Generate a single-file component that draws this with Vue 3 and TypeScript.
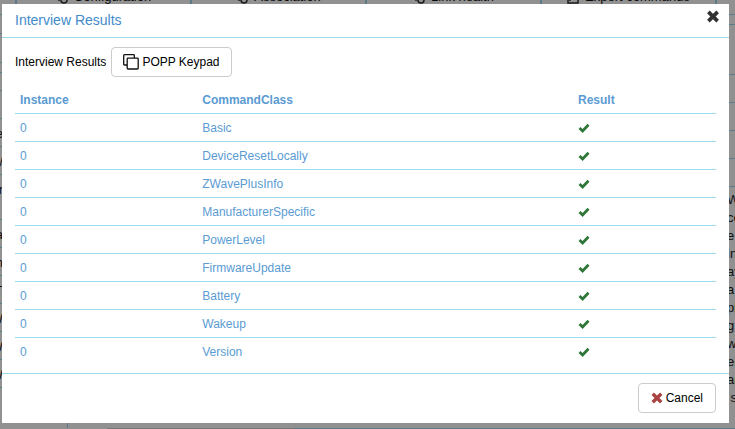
<script setup lang="ts">
import { ref } from 'vue'

interface CommandClassResult {
  instance: number
  name: string
  done: boolean
}

interface PageRow {
  height: number
  text: string
}

const names: string[] = [
  'Basic',
  'DeviceResetLocally',
  'ZWavePlusInfo',
  'ManufacturerSpecific',
  'PowerLevel',
  'FirmwareUpdate',
  'Battery',
  'Wakeup',
  'Version',
]
const results: CommandClassResult[] = names.map((name) => ({ instance: 0, name, done: true }))
const open = ref(true)
const tabs: string[] = ['Configuration', 'Association', 'Link health', 'Expert commands']
const rows: PageRow[] = [
  { height: 19, text: '' },
  { height: 29, text: '' },
  { height: 10, text: '' },
  { height: 18, text: '' },
  { height: 28, text: '' },
  { height: 28, text: 'e' },
  { height: 28, text: '/' },
  { height: 45, text: 'r' },
  { height: 28, text: 'a' },
  { height: 28, text: 'n' },
  { height: 28, text: 'T' },
  { height: 28, text: 'W' },
  { height: 28, text: 'W' },
  { height: 28, text: 'W' },
  { height: 28, text: '' },
]
const gaps: number[] = [10, 50, 28, 28, 28, 28, 5]
const notes: string[] = ['W', 'ce', 'e', 'in', 'ay', 'a', 'pl', 'g', 'wo', 'er', 'an', ' s']
</script>

<template>
  <div class="screen">
    <div class="page" aria-hidden="true">
      <nav class="tabs">
        <span v-for="(tab, i) in tabs" :key="tab" class="tab">
          <svg class="tab-icon" viewBox="0 0 12 12">
            <rect v-if="i === 3" x="1" y="1" width="10" height="10" />
            <circle v-else cx="8" cy="8" r="3" />
            <path d="M3 4v5" />
          </svg>
          {{ tab }}
        </span>
      </nav>
      <div class="columns">
        <div class="labels">
          <div v-for="(row, i) in rows" :key="i" class="row" :style="{ height: row.height + 'px' }">
            <span>{{ row.text }}</span>
          </div>
        </div>
        <div class="notes">
          <i v-for="(gap, i) in gaps" :key="i" class="rule" :style="{ height: gap + 'px' }"></i>
          <p v-for="note in notes" :key="note">{{ note }}</p>
        </div>
      </div>
      <div class="progress"><i></i></div>
    </div>

    <div v-if="open" class="backdrop">
      <section class="modal" role="dialog" aria-labelledby="modal-title">
        <header class="modal-header">
          <h1 id="modal-title">Interview Results</h1>
          <button class="close" type="button" aria-label="Close" @click="open = false">
            <svg viewBox="0 0 14 14"><path d="M2 2L12 12M12 2L2 12" /></svg>
          </button>
        </header>

        <div class="modal-body">
          <div class="device">
            <span>Interview Results</span>
            <button class="btn" type="button">
              <svg class="copy" viewBox="0 0 16 16">
                <path d="M4 11H1.5Q.7 11 .7 10.2V1.5Q.7 .7 1.5 .7H10.5Q11.3 .7 11.3 1.5V4" />
                <rect x="4.2" y="4.2" width="11" height="10.8" rx=".8" />
              </svg>
              POPP Keypad
            </button>
          </div>
          <table>
            <thead>
              <tr>
                <th class="instance">Instance</th>
                <th class="command">CommandClass</th>
                <th>Result</th>
              </tr>
            </thead>
            <tbody>
              <tr v-for="row in results" :key="row.name">
                <td>{{ row.instance }}</td>
                <td>{{ row.name }}</td>
                <td>
                  <svg v-if="row.done" class="check" viewBox="0 0 12 10" role="img" aria-label="Done">
                    <path d="M1.5 5L4.6 8L10.5 1.8" />
                  </svg>
                </td>
              </tr>
            </tbody>
          </table>
        </div>

        <footer class="modal-footer">
          <button class="btn" type="button" @click="open = false">
            <svg class="cancel" viewBox="0 0 14 14"><path d="M2 2L12 12M12 2L2 12" /></svg>
            Cancel
          </button>
        </footer>
      </section>
    </div>
  </div>
</template>

<style>
body {
  margin: 0;
}
</style>

<style scoped>
* {
  box-sizing: border-box;
}
.screen {
  position: relative;
  min-height: 100vh;
  overflow: hidden;
  font: 13px/18px "Liberation Sans", Arial, sans-serif;
  color: #222;
  background: #fff;
}
.page {
  position: absolute;
  inset: 0;
  display: flex;
  flex-direction: column;
  overflow: hidden;
}
.tabs {
  display: grid;
  grid-template-columns: repeat(4, 1fr);
  grid-auto-rows: 6px;
  margin: 0 18px 0 15px;
  border-right: 2px solid #9fd9ee;
}
.tab {
  display: flex;
  align-items: flex-end;
  justify-content: center;
  gap: 6px;
  border-left: 2px solid #9fd9ee;
  color: #111;
}
.tab-icon {
  width: 12px;
  height: 12px;
  margin-bottom: 2px;
  fill: none;
  stroke: #333;
  stroke-width: 1.5;
}
.columns {
  display: flex;
  flex: 1;
  justify-content: space-between;
  min-height: 0;
  padding-top: 8px;
}
.labels {
  width: 68px;
  border-right: 1px solid #9fd9ee;
}
.row {
  padding-top: 6px;
  border-top: 1px solid #9fd9ee;
}
.row span {
  display: flex;
  justify-content: flex-end;
  width: 3px;
}
.notes {
  width: 8px;
  overflow: hidden;
  white-space: pre;
}
.rule {
  display: block;
  border-top: 1px solid #9fd9ee;
}
.notes p {
  margin: 0;
}
.progress {
  height: 1px;
  margin-left: 107px;
  background: #d2d2d2;
}
.progress i {
  display: block;
  height: 1px;
  margin-left: 30%;
  background: #9fd9ee;
}
.backdrop {
  position: relative;
  min-height: 100vh;
  padding: 4px 6px 6px 2px;
  background: rgba(0, 0, 0, 0.43);
}
.modal {
  background: #fff;
}
.modal-header {
  display: flex;
  align-items: flex-start;
  justify-content: space-between;
  height: 34px;
  padding: 6px 9px 0 13px;
  border-bottom: 1px solid #9fd9ee;
}
h1 {
  margin: 0;
  font-size: 14px;
  font-weight: 400;
  line-height: 20px;
  color: #428bca;
}
.close {
  width: 14px;
  height: 13px;
  padding: 0;
  border: 0;
  background: none;
}
.close svg {
  display: block;
  width: 14px;
  height: 13px;
  stroke: #333;
}
.close svg,
.cancel {
  fill: none;
  stroke-width: 4;
}
.modal-body {
  padding: 9px 13px;
}
.device {
  display: flex;
  align-items: center;
  gap: 5px;
  color: #000;
  font-size: 12px;
}
.btn {
  display: inline-flex;
  align-items: center;
  justify-content: center;
  gap: 3px;
  height: 30px;
  padding: 0 11px;
  border: 1px solid #ccc;
  border-radius: 4px;
  background: #fff;
  color: #000;
  font: 12px/18px "Liberation Sans", Arial, sans-serif;
}
.copy {
  width: 16px;
  height: 16px;
  fill: #fff;
  stroke: #111;
  stroke-width: 1.3;
}
.cancel {
  width: 12px;
  height: 12px;
  stroke: #a94442;
}
table {
  width: 100%;
  margin-top: 9px;
  border-collapse: collapse;
  table-layout: fixed;
  font-size: 12px;
  color: #5a9bd3;
}
th,
td {
  height: 28px;
  padding: 2px 5px 0;
  text-align: left;
}
th {
  height: 27px;
}
tbody td {
  border-top: 1px solid #9fd9ee;
}
tbody tr:last-child td {
  height: 27px;
}
.instance {
  width: 26%;
}
.command {
  width: 53.6%;
}
.check {
  display: block;
  width: 12px;
  height: 10px;
  fill: none;
  stroke: #2f7738;
  stroke-width: 2.8;
}
.modal-footer {
  display: flex;
  justify-content: flex-end;
  padding: 9px 13px 10px;
  border-top: 1px solid #9fd9ee;
}
.modal-footer .btn {
  padding: 0 12px;
}
</style>
